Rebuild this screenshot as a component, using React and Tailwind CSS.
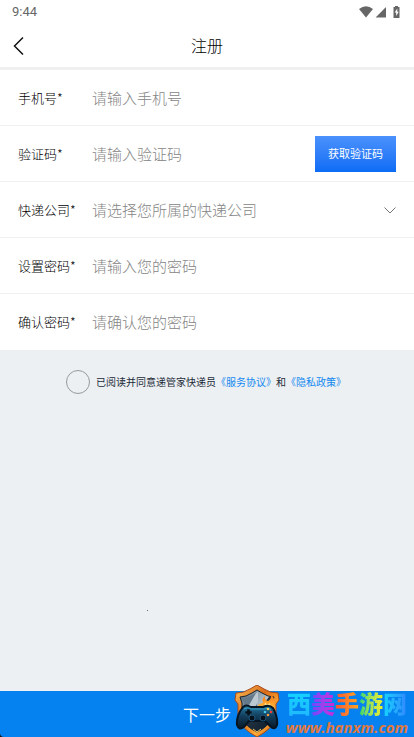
import { useState } from 'react';

const fontStack = "font-[family-name:'Noto_Sans_CJK_SC',sans-serif]";

function StatusBar() {
  return (
    <div className="flex h-6 items-center justify-between pr-3 pl-3">
      <span className="font-[family-name:Roboto,sans-serif] text-[13px] leading-4 text-[#666]">9:44</span>
      <div className="flex items-center text-[#666]">
        <svg className="h-3 w-4" viewBox="0 0 16 12" fill="currentColor" aria-hidden="true">
          <path d="M1 3Q8-2.4 15 3L8 11.6Z" />
        </svg>
        <svg className="h-3 w-4" viewBox="0 0 16 12" fill="currentColor" aria-hidden="true">
          <path d="M12 1V11.5H1.6Z" />
        </svg>
        <svg className="h-3 w-3" viewBox="0 0 12 12" aria-hidden="true">
          <path d="M5 0h3v1h1.500v11h-6V1H5Z" fill="currentColor" />
          <path d="M7.300 2.500 4.700 6.600h1.500V10L8.700 5.800H7.300Z" fill="#fff" />
        </svg>
      </div>
    </div>
  );
}

function Field({ id, label, children }) {
  return (
    <div className="flex h-14 items-center border-b border-[#f1f1f1] pr-[18px] pl-[18px] last:border-white">
      <label htmlFor={id} className="w-[74px] shrink-0 text-[13px] leading-5 font-light whitespace-nowrap text-black">
        {label}*
      </label>
      {children}
    </div>
  );
}

function TextInput({ id, type = 'text', placeholder }) {
  return (
    <input
      id={id}
      type={type}
      placeholder={placeholder}
      className="h-10 min-w-0 flex-1 bg-transparent text-[15px] font-light text-[#333] outline-none placeholder:text-[#858585]"
    />
  );
}

function Shield() {
  return (
    <svg className="h-[52px] w-[46px] shrink-0" viewBox="0 0 46 52" aria-hidden="true">
      <defs>
        <linearGradient id="rim" x1="0" y1="0" x2="1" y2="1">
          <stop offset="0" stopColor="#ffc65c" />
          <stop offset=".4" stopColor="#d96a18" />
          <stop offset=".7" stopColor="#ffab35" />
          <stop offset="1" stopColor="#b73c0c" />
        </linearGradient>
        <linearGradient id="steel" x1="0" y1="0" x2="1" y2="1">
          <stop offset="0" stopColor="#526779" />
          <stop offset=".5" stopColor="#b5c3cc" />
          <stop offset=".52" stopColor="#20303e" />
          <stop offset="1" stopColor="#0d1a28" />
        </linearGradient>
        <linearGradient id="flame" x1="0" y1="0" x2="0" y2="1">
          <stop offset="0" stopColor="#ff7417" />
          <stop offset="1" stopColor="#ffc33c" />
        </linearGradient>
        <linearGradient id="pad" x1="0" y1="0" x2="0" y2="1">
          <stop offset="0" stopColor="#227ca6" />
          <stop offset=".45" stopColor="#123e5c" />
          <stop offset="1" stopColor="#081827" />
        </linearGradient>
      </defs>
      <path d="M23 0 30 4Q36 8 44 8L45 15 42 19V34Q38 44 23 52Q8 44 4 34V19L1 15 2 8Q10 8 16 4Z" fill="url(#rim)" stroke="#a8481a" strokeWidth="1" />
      <path d="M23 5 28 8Q34 12 40 12L38 18V33Q34 42 23 47Q12 42 8 33V18L6 12Q12 12 18 8Z" fill="url(#steel)" stroke="#172633" strokeWidth="1" />
      <path d="M23 7V23H10V18L8 13Q16 12 23 7Z" fill="#64798a" />
      <path d="m22 8-8 14h7l3-5V7Z" fill="#bdc9d0" />
      <path d="M22 24Q24 18 29 18Q27 14 31 11Q30 15 34 16Q38 14 37 9Q43 16 39 25Z" fill="url(#flame)" />
      <path d="M28 23q3-2 3-6 2 4 5 1 0 4 2 6Z" fill="#ffe287" />
      <path d="M9 22Q12 19 17 22H29Q35 19 39 23Q44 32 43 40Q41 46 36 41L31 36H15L10 42Q5 46 3 40Q2 31 9 22Z" fill="url(#pad)" stroke="#071422" strokeWidth="2" />
      <path d="M10 24q3-2 7 0h13q4-2 7 1" fill="none" stroke="#3a9bc0" strokeWidth="1" />
      <path d="M11 26h2v-2h3v2h2v3h-2v2h-3v-2h-2Z" fill="#07121e" stroke="#286486" strokeWidth=".5" />
      <circle cx="18" cy="33" r="3" fill="#06111e" stroke="#1f567a" />
      <circle cx="29" cy="33" r="3" fill="#06111e" stroke="#1f567a" />
      <circle cx="34" cy="24" r="1.300" fill="#ffd252" />
      <circle cx="37" cy="27" r="1.300" fill="#f33f32" />
      <circle cx="34" cy="30" r="1.300" fill="#ff9a35" />
      <circle cx="31" cy="27" r="1.300" fill="#43c7ea" />
      <path d="m19 44 4 3 4-3" fill="none" stroke="#ffca61" strokeWidth="1" />
    </svg>
  );
}

function SiteMark() {
  return (
    <div className="pointer-events-none absolute right-[6px] bottom-0 flex items-end gap-[6px]">
      <Shield />
      <div className="flex flex-col items-center">
        <div className="flex text-[24px] leading-7 font-black">
          <span className="bg-linear-to-b from-[#10d5ff] to-[#20b8ff] bg-clip-text text-transparent">西</span>
          <span className="bg-linear-to-r from-[#6a45ff] to-[#d020d8] bg-clip-text text-transparent">美</span>
          <span className="bg-linear-to-r from-[#ff5030] to-[#ffa51f] bg-clip-text text-transparent">手</span>
          <span className="bg-linear-to-r from-[#20d66b] to-[#f0ee20] bg-clip-text text-transparent">游</span>
          <span className="bg-linear-to-r from-[#12d4ff] to-[#3287ff] bg-clip-text text-transparent">网</span>
        </div>
        <span className="font-[family-name:'Open_Sans',sans-serif] text-[15px] leading-5 font-bold text-[#e17840] italic">www.hanxm.com</span>
      </div>
    </div>
  );
}

export default function App() {
  const [agreed, setAgreed] = useState(false);
  return (
    <div className={`relative flex min-h-screen flex-col bg-[#ecf0f3] ${fontStack}`}>
      <header className="border-b-3 border-[#f0f0f0] bg-white">
        <StatusBar />
        <div className="grid h-[43px] grid-cols-[48px_1fr_48px] items-center">
          <button type="button" aria-label="返回" className="flex h-10 items-center pl-3">
            <svg className="h-5 w-3" viewBox="0 0 12 20" fill="none" stroke="#111" strokeWidth="1.500" aria-hidden="true">
              <path d="M11 1.500 2.500 10l8.500 8.500" />
            </svg>
          </button>
          <h1 className="pb-0.5 text-center text-base leading-6 font-light text-black">注册</h1>
        </div>
      </header>

      <form className="flex flex-1 flex-col" onSubmit={(e) => e.preventDefault()}>
        <div className="bg-white">
          <Field id="phone" label="手机号">
            <TextInput id="phone" type="tel" placeholder="请输入手机号" />
          </Field>
          <Field id="code" label="验证码">
            <TextInput id="code" placeholder="请输入验证码" />
            <button type="button" className="h-9 w-[81px] bg-linear-to-b from-[#4a91fc] to-[#0a6cf5] text-[11px] text-white">
              获取验证码
            </button>
          </Field>
          <Field id="company" label="快递公司">
            <select id="company" defaultValue="" className="h-10 min-w-0 flex-1 appearance-none bg-transparent pt-0.5 text-[15px] font-light text-[#858585] outline-none">
              <option value="">请选择您所属的快递公司</option>
            </select>
            <svg className="pointer-events-none h-3 w-3" viewBox="0 0 12 12" fill="none" stroke="#777" aria-hidden="true">
              <path d="m.5 3.500 5.500 5.500 5.500-5.500" />
            </svg>
          </Field>
          <Field id="password" label="设置密码">
            <TextInput id="password" type="password" placeholder="请输入您的密码" />
          </Field>
          <Field id="confirm" label="确认密码">
            <TextInput id="confirm" type="password" placeholder="请确认您的密码" />
          </Field>
        </div>

        <div className="mt-5 flex items-center justify-center pr-0.5 text-[10px] leading-4 text-[#222b38]">
          <input
            id="agree"
            type="checkbox"
            checked={agreed}
            onChange={(e) => setAgreed(e.target.checked)}
            className="mr-[6px] size-6 appearance-none rounded-full border border-[#999] checked:bg-[#0582f0]"
          />
          <label htmlFor="agree">已阅读并同意递管家快递员</label>
          <a href="#service" className="text-[#1489f0]">《服务协议》</a>
          <span>和</span>
          <a href="#privacy" className="text-[#1489f0]">《隐私政策》</a>
        </div>

        <button type="submit" className="mt-auto h-[46px] bg-[#0582f0] text-base text-white">
          下一步
        </button>
      </form>
      <span className="absolute bottom-[126px] left-[147px] size-px bg-[#666]" aria-hidden="true" />
      <svg className="absolute bottom-0 left-0 h-1 w-1" viewBox="0 0 4 4" aria-hidden="true">
        <path d="M0 0Q0 4 4 4H0Z" fill="#111" />
      </svg>
      <SiteMark />
    </div>
  );
}
